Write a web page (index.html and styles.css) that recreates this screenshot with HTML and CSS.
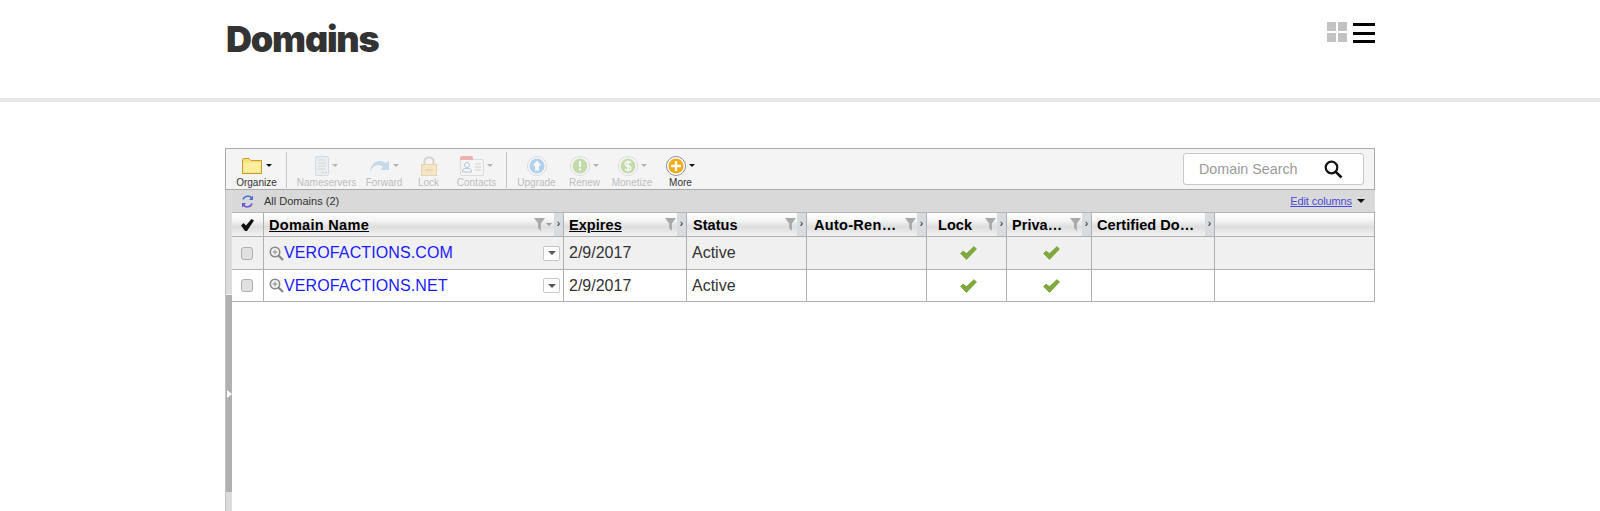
FILE: index.html
```html
<!DOCTYPE html>
<html lang="en">
<head>
<meta charset="utf-8">
<title>Domains</title>
<link rel="stylesheet" href="styles.css">
</head>
<body>
<svg class="defs" width="0" height="0" aria-hidden="true">
  <defs>
    <symbol id="funnel" viewBox="0 0 12 14"><path d="M0 0H12L7.5 6V14L4.5 11V6Z" fill="#a9a9a9"/></symbol>
    <symbol id="check" viewBox="0 0 17 14"><path d="M0.5 7.500L3 5L6.500 7.500L14 0.500L16.500 3L6.500 13.500Z" fill="#7fa93a" stroke="#6d9a2c" stroke-width=".6"/></symbol>
    <symbol id="zoom" viewBox="0 0 15 15"><circle cx="6" cy="6" r="4.7" fill="#f4f4f4" stroke="#8a8a8a" stroke-width="1.6"/><path d="M9.5 9.5L14 14" stroke="#8a8a8a" stroke-width="2.4"/><path d="M3.7 6H8.3M6 3.7V8.3" stroke="#8a8a8a" stroke-width="1"/></symbol>
  </defs>
</svg>
<header class="page-head">
  <h1 class="title">Domains</h1>
  <div class="view-switch">
    <div class="view-grid"><i></i><i></i><i></i><i></i></div>
    <div class="view-list"><i></i><i></i><i></i></div>
  </div>
</header>
<main class="widget">
  <div class="toolbar">
    <div class="tool tool-organize">
      <div class="tool-icon">
        <svg class="ic" width="21" height="16" viewBox="0 0 21 16"><path d="M.5 15.5V1.5Q.5.5 1.5.5H7L9 2.5H19.5V15.5Z" fill="#f6e27a" stroke="#c59a34"/><path d="M1.5 4.5H18.5V14.5H1.5Z" fill="#fbee9e"/></svg>
        <span class="caret caret-dark"></span>
      </div>
      <span class="tool-label">Organize</span>
    </div>
    <span class="sep"></span>
    <div class="tool tool-off tool-names">
      <div class="tool-icon">
        <svg class="ic" width="14" height="20" viewBox="0 0 14 20"><rect x=".5" y=".5" width="13" height="19" rx="1.5" fill="#dfe6ee" stroke="#a9b6c4"/><path d="M3 4H11M3 7H11M3 10H11M3 13H11" stroke="#9fb0c2"/><path d="M7 16.5H9" stroke="#6bb36b"/><path d="M10 16.5H12" stroke="#e07c6c"/></svg>
        <span class="caret"></span>
      </div>
      <span class="tool-label">Nameservers</span>
    </div>
    <div class="tool tool-off tool-forward">
      <div class="tool-icon">
        <svg class="ic" width="20" height="14" viewBox="0 0 20 14"><path d="M0 13Q1 3 9 2Q13 1.500 15 4L19 2V11H10L13 8Q11 6 8 6Q3 6 0 13Z" fill="#7fb2dc"/></svg>
        <span class="caret"></span>
      </div>
      <span class="tool-label">Forward</span>
    </div>
    <div class="tool tool-off tool-lock">
      <div class="tool-icon">
        <svg class="ic" width="16" height="20" viewBox="0 0 16 20"><path d="M3.5 9V5.5Q3.5 1.5 8 1.5T12.5 5.5V9" fill="none" stroke="#a8a8a8" stroke-width="2"/><rect x=".5" y="8.5" width="15" height="11" fill="#f4d27e" stroke="#d6a64a"/><path d="M4 14H12" stroke="#b8862f"/></svg>
      </div>
      <span class="tool-label">Lock</span>
    </div>
    <div class="tool tool-off tool-contacts">
      <div class="tool-icon">
        <svg class="ic" width="24" height="20" viewBox="0 0 24 20"><rect x=".5" y="3.5" width="23" height="16" rx="1.5" fill="#f8f8f8" stroke="#b9b9b9"/><path d="M0 4V2Q0 0 2 0H11Q13 0 13 2V4Z" fill="#e2504a"/><circle cx="7" cy="9" r="2.5" fill="#fff" stroke="#3f7fc4"/><path d="M2.500 16V14Q7 10.500 11.500 14V16Z" fill="#fff" stroke="#3f7fc4"/><path d="M15 8H21M15 11H21M15 14H21" stroke="#9a9a9a"/></svg>
        <span class="caret"></span>
      </div>
      <span class="tool-label">Contacts</span>
    </div>
    <span class="sep"></span>
    <div class="tool tool-off tool-upgrade">
      <div class="tool-icon">
        <svg class="ic" width="20" height="20" viewBox="0 0 20 20"><circle cx="10" cy="10" r="9.500" fill="#fff" stroke="#b4b4b4"/><circle cx="10" cy="10" r="7.500" fill="#4f9be0"/><path d="M10 4.500L14.500 9.500H12V14.500H8V9.500H5.500Z" fill="#fff"/></svg>
      </div>
      <span class="tool-label">Upgrade</span>
    </div>
    <div class="tool tool-off tool-renew">
      <div class="tool-icon">
        <svg class="ic" width="20" height="20" viewBox="0 0 20 20"><circle cx="10" cy="10" r="9.500" fill="#fff" stroke="#b4b4b4"/><circle cx="10" cy="10" r="7.500" fill="#7cb544"/><path d="M9 5H11V11H9ZM9 12.500H11V14.500H9Z" fill="#fff"/></svg>
        <span class="caret"></span>
      </div>
      <span class="tool-label">Renew</span>
    </div>
    <div class="tool tool-off tool-monetize">
      <div class="tool-icon">
        <svg class="ic" width="20" height="20" viewBox="0 0 20 20"><circle cx="10" cy="10" r="9.500" fill="#fff" stroke="#b4b4b4"/><circle cx="10" cy="10" r="7.500" fill="#7cb544"/><path d="M13 7Q12 5.800 10 5.800Q7.200 5.800 7.200 7.800T10 10T12.800 12.200T10 14.200Q8 14.200 7 13M10 4.500V15.500" fill="none" stroke="#fff" stroke-width="1.500"/></svg>
        <span class="caret"></span>
      </div>
      <span class="tool-label">Monetize</span>
    </div>
    <div class="tool tool-more">
      <div class="tool-icon">
        <svg class="ic" width="20" height="20" viewBox="0 0 20 20"><circle cx="10" cy="10" r="9.500" fill="#fff" stroke="#8e8e8e"/><circle cx="10" cy="10" r="7.500" fill="#f2ac18"/><path d="M8.800 5H11.200V8.800H15V11.200H11.200V15H8.800V11.200H5V8.800H8.800Z" fill="#fff"/></svg>
        <span class="caret caret-dark"></span>
      </div>
      <span class="tool-label">More</span>
    </div>
    <label class="search">
      <span class="search-text">Domain Search</span>
      <svg width="19" height="19" viewBox="0 0 19 19"><circle cx="7.500" cy="7.500" r="5.800" fill="none" stroke="#111" stroke-width="2.200"/><path d="M11.800 11.800L17.500 17.500" stroke="#111" stroke-width="2.600"/></svg>
    </label>
  </div>
  <div class="body">
    <div class="splitter">
      <div class="split-cap split-top"></div>
      <div class="split-handle"><span class="split-arrow"></span></div>
      <div class="split-cap split-bottom"></div>
    </div>
    <div class="content">
      <div class="listbar">
        <svg class="refresh" width="13" height="13" viewBox="0 0 13 13"><path d="M11 3.500A5 5 0 0 0 2 4.500" fill="none" stroke="#4a6fd8" stroke-width="1.500"/><path d="M2 9.500A5 5 0 0 0 11 8.500" fill="none" stroke="#6a4fd0" stroke-width="1.500"/><path d="M12 .5V5H8Z" fill="#4a6fd8"/><path d="M1 12.500V8H5Z" fill="#6a4fd0"/></svg>
        <span class="list-name">All Domains (2)</span>
        <a class="edit-cols" href="#">Edit columns</a>
        <span class="caret caret-black"></span>
      </div>
      <table class="grid">
        <colgroup>
          <col class="c-check"><col class="c-domain"><col class="c-expires"><col class="c-status"><col class="c-auto"><col class="c-lock"><col class="c-priv"><col class="c-cert"><col class="c-rest">
        </colgroup>
        <thead>
          <tr>
            <th class="th-check"><svg width="13" height="12" viewBox="0 0 13 12"><path d="M0 6.500L2.500 4L5 6.500L10.500 0L13 1.500L6 12H4Z" fill="#111"/></svg></th>
            <th><div class="th-in"><a class="th-label sortable th-domain" href="#">Domain Name</a><svg class="funnel"><use href="#funnel"/></svg><span class="caret th-caret"></span><span class="resize">›</span></div></th>
            <th><div class="th-in"><a class="th-label sortable" href="#">Expires</a><svg class="funnel"><use href="#funnel"/></svg><span class="resize">›</span></div></th>
            <th><div class="th-in"><span class="th-label th-status">Status</span><svg class="funnel"><use href="#funnel"/></svg><span class="resize">›</span></div></th>
            <th><div class="th-in"><span class="th-label th-auto">Auto-Ren…</span><svg class="funnel"><use href="#funnel"/></svg><span class="resize">›</span></div></th>
            <th><div class="th-in"><span class="th-label th-lock">Lock</span><svg class="funnel"><use href="#funnel"/></svg><span class="resize">›</span></div></th>
            <th><div class="th-in"><span class="th-label">Priva…</span><svg class="funnel"><use href="#funnel"/></svg><span class="resize">›</span></div></th>
            <th><div class="th-in"><span class="th-label">Certified Do…</span><span class="resize">›</span></div></th>
            <th></th>
          </tr>
        </thead>
        <tbody>
          <tr class="row-alt">
            <td class="td-check"><span class="checkbox"></span></td>
            <td><div class="domain"><svg class="zoom"><use href="#zoom"/></svg><a class="domain-link" href="#">VEROFACTIONS.COM</a><span class="row-menu"><span class="caret caret-grey"></span></span></div></td>
            <td>2/9/2017</td>
            <td>Active</td>
            <td></td>
            <td class="td-center"><svg class="check"><use href="#check"/></svg></td>
            <td class="td-center"><svg class="check"><use href="#check"/></svg></td>
            <td></td>
            <td></td>
          </tr>
          <tr>
            <td class="td-check"><span class="checkbox"></span></td>
            <td><div class="domain"><svg class="zoom"><use href="#zoom"/></svg><a class="domain-link" href="#">VEROFACTIONS.NET</a><span class="row-menu"><span class="caret caret-grey"></span></span></div></td>
            <td>2/9/2017</td>
            <td>Active</td>
            <td></td>
            <td class="td-center"><svg class="check"><use href="#check"/></svg></td>
            <td class="td-center"><svg class="check"><use href="#check"/></svg></td>
            <td></td>
            <td></td>
          </tr>
        </tbody>
      </table>
    </div>
  </div>
</main>
</body>
</html>
```

FILE: styles.css
```css
* { box-sizing: border-box; }
html, body { height: 100%; margin: 0; }
body {
  display: flex;
  flex-direction: column;
  overflow: hidden;
  background: #fff;
  font-family: "Liberation Sans", Arial, sans-serif;
  color: #333;
}
.defs { display: block; height: 0; }

/* Page head */
.page-head {
  flex: none;
  height: 102px;
  border-bottom: 4px solid #e6e6e6;
  padding: 19px 25px 0 226px;
  display: flex;
  justify-content: space-between;
  align-items: flex-start;
  width: 100%;
}
.title {
  margin: 0;
  font-family: Inter, sans-serif;
  font-weight: 900;
  font-size: 36px;
  line-height: 40px;
  letter-spacing: -1.2px;
  font-feature-settings: "cv11" 1;
  color: #333;
}
.view-switch { display: flex; gap: 6px; margin: 3px 200px 0 0; }
.view-grid { display: grid; grid-template-columns: 9px 9px; grid-auto-rows: 9px; gap: 2px; }
.view-grid i { background: #c2c2c2; }
.view-list { width: 22px; height: 20px; display: flex; flex-direction: column; justify-content: space-between; margin-top: 1px; }
.view-list i { height: 3px; background: #000; }

/* Widget */
.widget {
  flex: 1;
  min-height: 0;
  width: 1150px;
  margin: 46px 0 0 225px;
  display: flex;
  flex-direction: column;
}
.toolbar {
  flex: none;
  height: 42px;
  border: 1px solid #ababab;
  background: #f4f4f4;
  display: flex;
  padding-left: 1px;
}
.tool {
  flex: none;
  display: flex;
  flex-direction: column;
  align-items: center;
  padding-top: 5px;
}
.tool-icon { height: 24px; display: flex; align-items: center; gap: 3px; }
.tool-label { font-size: 10px; line-height: 12px; color: #333; white-space: nowrap; }
.tool-off .tool-icon { opacity: .4; }
.tool-off .tool-label { color: #bdbdbd; }
.ic { display: block; }
.sep { flex: none; width: 1px; height: 36px; margin-top: 3px; background: #c8c8c8; }

.tool-organize { width: 59px; }
.tool-organize + .sep { margin-right: 4px; }
.tool-names { width: 71px; }
.tool-forward { width: 44px; }
.tool-lock { width: 45px; }
.tool-contacts { width: 51px; margin-right: 4px; }
.tool-contacts + .sep { margin-right: 5px; }
.tool-upgrade { width: 49px; }
.tool-renew { width: 47px; }
.tool-monetize { width: 48px; }
.tool-more { width: 49px; }

.caret {
  flex: none;
  width: 0; height: 0;
  border-left: 3px solid transparent;
  border-right: 3px solid transparent;
  border-top: 3px solid #555;
}
.caret-dark { border-top-color: #111; }
.caret-black { border-left-width: 4px; border-right-width: 4px; border-top: 4px solid #111; }
.caret-grey { border-left-width: 4px; border-right-width: 4px; border-top: 4px solid #555; }

.search {
  margin: 4px 10px 0 auto;
  width: 181px;
  height: 32px;
  background: #fff;
  border: 1px solid #c9c9c9;
  border-radius: 3px;
  display: flex;
  align-items: center;
  padding: 0 20px 0 15px;
  justify-content: space-between;
}
.search-text { font-size: 14.3px; color: #9a9a9a; }

/* Body */
.body { flex: 1; min-height: 0; display: flex; }
.splitter {
  flex: none;
  width: 7px;
  display: flex;
  flex-direction: column;
  border-left: 1px solid #c4c4c4;
}
.split-cap { flex: none; background: #dcdcdc; }
.split-top { height: 105px; border-bottom: 1px solid #f4f4f4; }
.split-bottom { height: 19px; }
.split-handle {
  flex: 1;
  background: #b0b0b0;
  display: flex;
  align-items: center;
  padding-left: 1px;
}
.split-arrow {
  width: 0; height: 0;
  border-top: 4px solid transparent;
  border-bottom: 4px solid transparent;
  border-left: 5px solid #fff;
}
.content { flex: 1; min-width: 0; }

.listbar {
  height: 23px;
  background: #d9d9d9;
  border-bottom: 1px solid #b5b5b5;
  display: flex;
  align-items: center;
  padding: 0 10px 0 9px;
  font-size: 11px;
}
.refresh { flex: none; }
.list-name { margin-left: 10px; color: #333; }
.edit-cols { margin-left: auto; color: #4a4ad6; margin-right: 5px; letter-spacing: -.1px; }

/* Table */
.grid {
  table-layout: fixed;
  border-collapse: separate;
  border-spacing: 0;
  width: 1143px;
}
.c-check { width: 32px; }
.c-domain { width: 300px; }
.c-expires { width: 123px; }
.c-status { width: 120px; }
.c-auto { width: 120px; }
.c-lock { width: 80px; }
.c-priv { width: 85px; }
.c-cert { width: 123px; }
.c-rest { width: 160px; }

.grid th {
  height: 24px;
  padding: 0;
  border-right: 1px solid #b0b0b0;
  border-bottom: 1px solid #b0b0b0;
  background: linear-gradient(#fff 0, #f6f6f6 30%, #dedede 60%, #f2f2f2 100%);
  text-align: left;
  font-size: 14.5px;
  font-weight: bold;
  color: #000;
}
.grid th:last-child { border-right-color: #ababab; }
.th-check { text-align: center !important; line-height: 0; vertical-align: middle; }
.th-in { display: flex; align-items: center; height: 23px; padding-left: 5px; }
.th-label { color: #000; white-space: nowrap; letter-spacing: .05px; }
.th-domain { letter-spacing: .3px; }
.th-status { margin-left: 1px; }
.th-auto { margin-left: 2px; letter-spacing: .3px; }
.sortable { text-decoration: underline; }
.th-lock { margin-left: 6px; }
.funnel { width: 11px; height: 13px; margin-left: auto; flex: none; }
.th-caret { margin-left: 1px; border-top-color: #999; }
.funnel + .resize { margin-left: 1px; }
.th-caret + .resize { margin-left: 2px; }
.th-label + .resize { margin-left: auto; }
.resize {
  flex: none;
  width: 9px;
  height: 23px;
  background-color: #d8dcdf;
  background-image: radial-gradient(#f4f5f6 35%, transparent 40%);
  background-size: 2px 2px;
  font-size: 10px;
  font-weight: normal;
  line-height: 21px;
  text-align: center;
  color: #000;
}

.grid td {
  padding: 0 0 0 5px;
  border-right: 1px solid #b0b0b0;
  border-bottom: 1px solid #b0b0b0;
  font-size: 16px;
  color: #333;
  vertical-align: middle;
}
.grid tbody tr { height: 32px; }
.grid tbody .row-alt { height: 33px; background: #f0f0f0; }
.grid .td-check { padding: 0 2px 0 0; text-align: center; line-height: 0; }
.grid .td-center { padding: 0 0 0 4px; text-align: center; line-height: 0; }
.checkbox {
  display: inline-block;
  width: 12px;
  height: 13px;
  background: #e0e0e0;
  border: 1px solid #aeaeae;
  border-radius: 3px;
}
.check { width: 17px; height: 14px; }
.domain { display: flex; align-items: center; padding-right: 3px; }
.zoom { width: 15px; height: 15px; flex: none; }
.domain-link { color: #1a1aff; text-decoration: none; letter-spacing: .12px; }
.row-menu {
  margin-left: auto;
  width: 17px;
  height: 15px;
  background: #fff;
  border: 1px solid #c6c6c6;
  border-radius: 2px;
  display: flex;
  align-items: center;
  justify-content: center;
}
```
